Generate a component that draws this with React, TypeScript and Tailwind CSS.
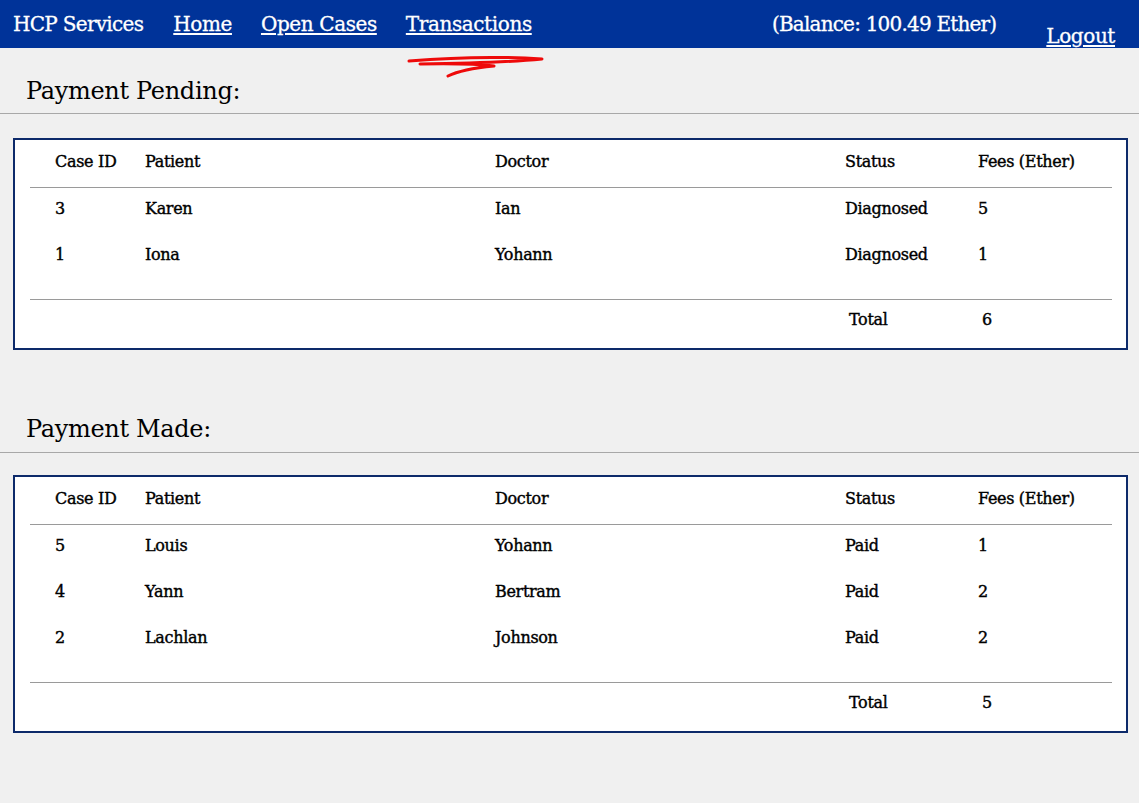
import React from 'react';

const pending = [
  { id: '3', patient: 'Karen', doctor: 'Ian', status: 'Diagnosed', fees: '5' },
  { id: '1', patient: 'Iona', doctor: 'Yohann', status: 'Diagnosed', fees: '1' },
];

const made = [
  { id: '5', patient: 'Louis', doctor: 'Yohann', status: 'Paid', fees: '1' },
  { id: '4', patient: 'Yann', doctor: 'Bertram', status: 'Paid', fees: '2' },
  { id: '2', patient: 'Lachlan', doctor: 'Johnson', status: 'Paid', fees: '2' },
];

const cols = 'grid grid-cols-[115px_350px_350px_133px_1fr]';

function CaseTable({ rows, total }: { rows: typeof pending; total: string }) {
  return (
    <div className="ml-[13px] mr-[11px] border-2 border-[#0d2a6a] bg-white pl-[15px] pr-[14px] [-webkit-text-stroke:0.4px_currentColor]">
      <div className={`${cols} h-[48px] pt-[10px] leading-6 border-b border-[#9a9a9a]`}>
        <div className="pl-[25px]">Case ID</div>
        <div>Patient</div>
        <div>Doctor</div>
        <div>Status</div>
        <div>Fees (Ether)</div>
      </div>
      {rows.map(r => (
        <div key={r.id} className={`${cols} h-[46px] pt-[9px] leading-6`}>
          <div className="pl-[25px]">{r.id}</div>
          <div>{r.patient}</div>
          <div>{r.doctor}</div>
          <div>{r.status}</div>
          <div>{r.fees}</div>
        </div>
      ))}
      <div className="h-[20px] border-b border-[#9a9a9a]" />
      <div className={`${cols} h-[48px] pt-2 leading-6`}>
        <div />
        <div />
        <div />
        <div className="pl-1">Total</div>
        <div className="pl-1">{total}</div>
      </div>
    </div>
  );
}

export default function App() {
  return (
    <div className="min-h-[803px] bg-[#f0f0f0] text-black text-[16px] font-['DejaVu_Serif',serif] tracking-[-0.02em]">
      <nav className="relative h-12 bg-[#003399] text-white text-[20px] tracking-[-0.02em] flex items-start [-webkit-text-stroke:0.3px_currentColor]">
        <div className="pl-[13px] pt-[10px] leading-[28px] tracking-[-0.035em]">HCP Services</div>
        <a className="ml-[30px] pt-[10px] leading-[28px] underline underline-offset-2">Home</a>
        <a className="ml-[29px] pt-[10px] leading-[28px] underline underline-offset-2">Open Cases</a>
        <a className="ml-[29px] pt-[10px] leading-[28px] underline underline-offset-2">Transactions</a>
        <div className="ml-auto pt-[10px] leading-[28px] tracking-[-0.04em]">(Balance: 100.49 Ether)</div>
        <a className="ml-[50px] mr-6 pt-[22px] leading-[28px] underline underline-offset-2">Logout</a>
        <svg className="absolute left-0 top-0 pointer-events-none" width="1139" height="90" viewBox="0 0 1139 90">
          <path
            d="M409 61 Q 480 55 542 59 Q 500 63 420 64 Q 470 63 494 66 Q 462 69 448 76"
            fill="none"
            stroke="#ee0a0a"
            strokeWidth="3"
            strokeLinecap="round"
            strokeLinejoin="round"
          />
        </svg>
      </nav>

      <h2 className="mt-[27px] pl-[26px] text-[24px] leading-8 font-normal">Payment Pending:</h2>
      <div className="mt-[6px] h-px bg-[#a8a8a8]" />
      <div className="mt-6">
        <CaseTable rows={pending} total="6" />
      </div>

      <h2 className="mt-[63px] pl-[26px] text-[24px] leading-8 font-normal">Payment Made:</h2>
      <div className="mt-[7px] h-px bg-[#a8a8a8]" />
      <div className="mt-[22px]">
        <CaseTable rows={made} total="5" />
      </div>
    </div>
  );
}
